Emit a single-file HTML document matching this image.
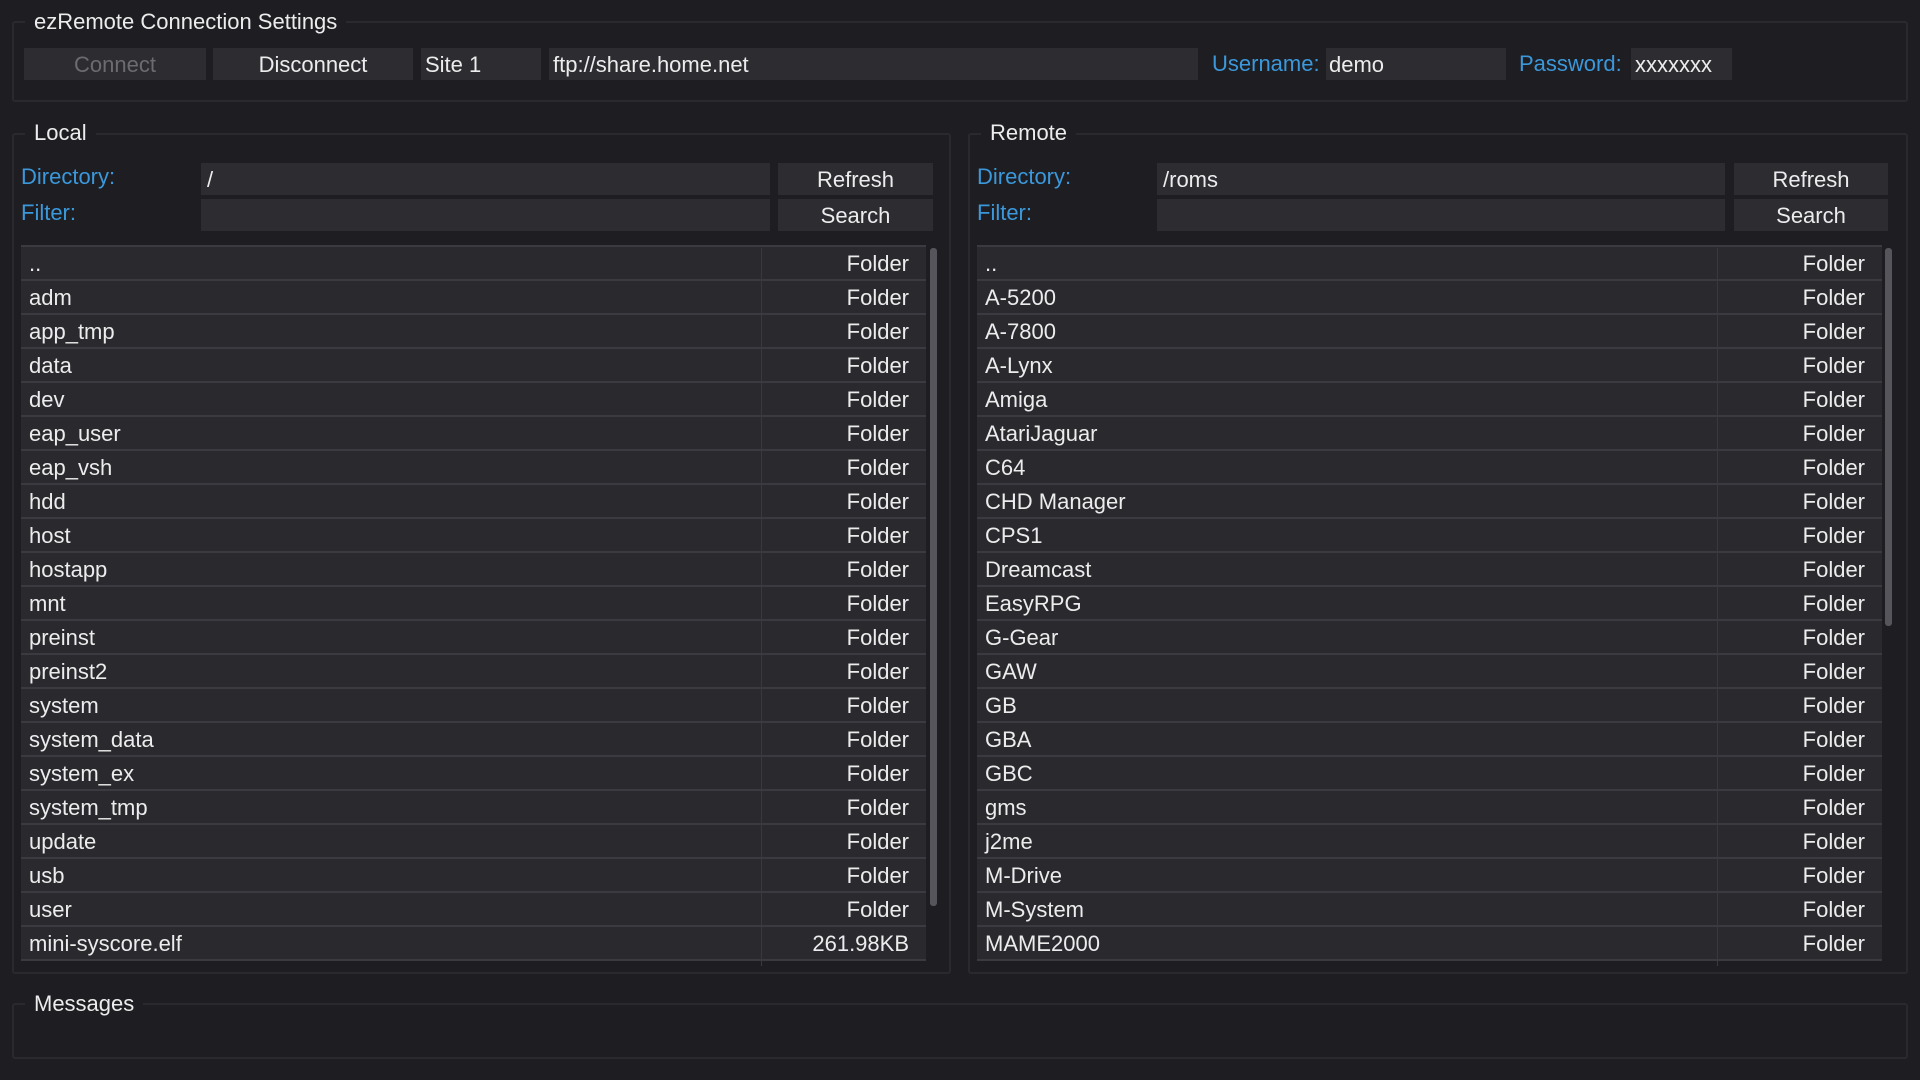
<!DOCTYPE html>
<html><head><meta charset="utf-8"><style>
*{margin:0;padding:0;box-sizing:border-box}
body{width:1920px;height:1080px;background:#1e1d21;font-family:"Liberation Sans",sans-serif;color:#ececec;font-size:22px;position:relative;overflow:hidden}
.grp{position:absolute;border:2px solid #2a292e;border-radius:3px}
.ttl{position:absolute;background:#1e1d21;padding:0 9px;line-height:24px;font-size:22px}
.btn{position:absolute;background:#2d2c31;text-align:center;line-height:33px;height:32px}
.fld{position:absolute;background:#2d2c31;line-height:33px;height:32px;padding-left:6px}
.lbl{position:absolute;color:#3a98db;line-height:32px}
.tbl{position:absolute;top:245px}
.row{height:34px;border-top:2px solid #3b3a40;background:#2a292e;position:relative;line-height:33px}
.row .n{position:absolute;left:8px}
.row .t{position:absolute;right:17px}
.vd{position:absolute;top:248px;width:1px;height:718px;background:#3a393e}
.sb{position:absolute;width:7px;background:#56555b;border-radius:3px}
</style></head><body>
<div class="grp" style="left:12px;top:21px;width:1896px;height:81px"></div>
<div class="ttl" style="left:25px;top:10px">ezRemote Connection Settings</div>
<div class="btn" style="left:24px;top:48px;width:182px;color:#6c6b70">Connect</div>
<div class="btn" style="left:213px;top:48px;width:200px">Disconnect</div>
<div class="fld" style="left:421px;top:48px;width:120px;padding-left:4px">Site 1</div>
<div class="fld" style="left:549px;top:48px;width:649px;padding-left:4px">ftp://share.home.net</div>
<div class="lbl" style="left:1212px;top:48px">Username:</div>
<div class="fld" style="left:1326px;top:48px;width:180px;padding-left:3px">demo</div>
<div class="lbl" style="left:1519px;top:48px">Password:</div>
<div class="fld" style="left:1631px;top:48px;width:101px;padding-left:4px">xxxxxxx</div>

<div class="grp" style="left:12px;top:133px;width:939px;height:841px"></div>
<div class="ttl" style="left:25px;top:121px">Local</div>
<div class="lbl" style="left:21px;top:161px">Directory:</div>
<div class="fld" style="left:201px;top:163px;width:569px">/</div>
<div class="btn" style="left:778px;top:163px;width:155px">Refresh</div>
<div class="lbl" style="left:21px;top:197px">Filter:</div>
<div class="fld" style="left:201px;top:199px;width:569px"></div>
<div class="btn" style="left:778px;top:199px;width:155px">Search</div>
<div class="tbl" style="left:21px;width:905px">
<div class="row"><span class="n">..</span><span class="t">Folder</span></div>
<div class="row"><span class="n">adm</span><span class="t">Folder</span></div>
<div class="row"><span class="n">app_tmp</span><span class="t">Folder</span></div>
<div class="row"><span class="n">data</span><span class="t">Folder</span></div>
<div class="row"><span class="n">dev</span><span class="t">Folder</span></div>
<div class="row"><span class="n">eap_user</span><span class="t">Folder</span></div>
<div class="row"><span class="n">eap_vsh</span><span class="t">Folder</span></div>
<div class="row"><span class="n">hdd</span><span class="t">Folder</span></div>
<div class="row"><span class="n">host</span><span class="t">Folder</span></div>
<div class="row"><span class="n">hostapp</span><span class="t">Folder</span></div>
<div class="row"><span class="n">mnt</span><span class="t">Folder</span></div>
<div class="row"><span class="n">preinst</span><span class="t">Folder</span></div>
<div class="row"><span class="n">preinst2</span><span class="t">Folder</span></div>
<div class="row"><span class="n">system</span><span class="t">Folder</span></div>
<div class="row"><span class="n">system_data</span><span class="t">Folder</span></div>
<div class="row"><span class="n">system_ex</span><span class="t">Folder</span></div>
<div class="row"><span class="n">system_tmp</span><span class="t">Folder</span></div>
<div class="row"><span class="n">update</span><span class="t">Folder</span></div>
<div class="row"><span class="n">usb</span><span class="t">Folder</span></div>
<div class="row"><span class="n">user</span><span class="t">Folder</span></div>
<div class="row"><span class="n">mini-syscore.elf</span><span class="t">261.98KB</span></div>
<div style="height:2px;background:#3b3a40"></div>
</div>
<div class="vd" style="left:761px"></div>
<div class="sb" style="left:930px;top:248px;height:658px"></div>

<div class="grp" style="left:968px;top:133px;width:940px;height:841px"></div>
<div class="ttl" style="left:981px;top:121px">Remote</div>
<div class="lbl" style="left:977px;top:161px">Directory:</div>
<div class="fld" style="left:1157px;top:163px;width:568px">/roms</div>
<div class="btn" style="left:1734px;top:163px;width:154px">Refresh</div>
<div class="lbl" style="left:977px;top:197px">Filter:</div>
<div class="fld" style="left:1157px;top:199px;width:568px"></div>
<div class="btn" style="left:1734px;top:199px;width:154px">Search</div>
<div class="tbl" style="left:977px;width:905px">
<div class="row"><span class="n">..</span><span class="t">Folder</span></div>
<div class="row"><span class="n">A-5200</span><span class="t">Folder</span></div>
<div class="row"><span class="n">A-7800</span><span class="t">Folder</span></div>
<div class="row"><span class="n">A-Lynx</span><span class="t">Folder</span></div>
<div class="row"><span class="n">Amiga</span><span class="t">Folder</span></div>
<div class="row"><span class="n">AtariJaguar</span><span class="t">Folder</span></div>
<div class="row"><span class="n">C64</span><span class="t">Folder</span></div>
<div class="row"><span class="n">CHD Manager</span><span class="t">Folder</span></div>
<div class="row"><span class="n">CPS1</span><span class="t">Folder</span></div>
<div class="row"><span class="n">Dreamcast</span><span class="t">Folder</span></div>
<div class="row"><span class="n">EasyRPG</span><span class="t">Folder</span></div>
<div class="row"><span class="n">G-Gear</span><span class="t">Folder</span></div>
<div class="row"><span class="n">GAW</span><span class="t">Folder</span></div>
<div class="row"><span class="n">GB</span><span class="t">Folder</span></div>
<div class="row"><span class="n">GBA</span><span class="t">Folder</span></div>
<div class="row"><span class="n">GBC</span><span class="t">Folder</span></div>
<div class="row"><span class="n">gms</span><span class="t">Folder</span></div>
<div class="row"><span class="n">j2me</span><span class="t">Folder</span></div>
<div class="row"><span class="n">M-Drive</span><span class="t">Folder</span></div>
<div class="row"><span class="n">M-System</span><span class="t">Folder</span></div>
<div class="row"><span class="n">MAME2000</span><span class="t">Folder</span></div>
<div style="height:2px;background:#3b3a40"></div>
</div>
<div class="vd" style="left:1717px"></div>
<div class="sb" style="left:1885px;top:248px;height:378px"></div>

<div class="grp" style="left:12px;top:1003px;width:1896px;height:56px"></div>
<div class="ttl" style="left:25px;top:992px">Messages</div>
</body></html>
